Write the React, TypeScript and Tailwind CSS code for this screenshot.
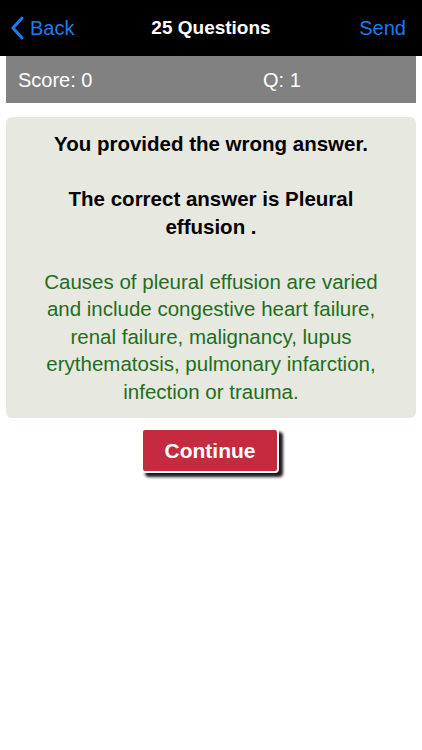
import React from "react";

export default function App() {
  return (
    <div className="w-[422px] h-[750px] bg-white flex flex-col" style={{ fontFamily: '"Liberation Sans", Arial, sans-serif' }}>
      {/* Nav bar */}
      <div className="h-[56px] bg-black flex items-center justify-between px-[10px] relative">
        <div className="flex items-center gap-[6px] text-[#1a7cf0] text-[20px]">
          <svg width="14" height="24" viewBox="0 0 14 24" fill="none">
            <path d="M12 2 L3 12 L12 22" stroke="#1a7cf0" strokeWidth="3" strokeLinecap="round" strokeLinejoin="round" />
          </svg>
          <span>Back</span>
        </div>
        <div className="absolute left-0 right-0 text-center text-white text-[19px] font-bold pointer-events-none">25 Questions</div>
        <span className="text-[#1a7cf0] text-[20px] pr-[6px]">Send</span>
      </div>

      {/* Score bar */}
      <div className="mx-[6px] h-[47px] bg-[#818181] flex items-center text-white text-[20px]">
        <span className="pl-[12px] w-[257px]">Score: 0</span>
        <span>Q: 1</span>
      </div>

      {/* Answer card */}
      <div className="mx-[6px] mt-[14px] bg-[#e7e8df] rounded-[6px] px-[30px] pt-[13px] pb-[13px] text-center text-[20.5px] leading-[27.5px]">
        <p className="font-bold text-black">You provided the wrong answer.</p>
        <p className="font-bold text-black mt-[27.5px]">The correct answer is Pleural effusion .</p>
        <p className="text-[#1e6e1e] mt-[27.5px]">
          Causes of pleural effusion are varied and include congestive heart failure, renal failure, malignancy, lupus erythematosis, pulmonary infarction, infection or trauma.
        </p>
      </div>

      {/* Continue */}
      <div className="flex justify-center mt-[10px]">
        <button className="w-[138px] h-[45px] bg-[#c52a3e] border-2 border-white rounded-[4px] text-white font-bold text-[21px] shadow-[4px_4px_3px_rgba(0,0,0,0.9)] ml-[-2px]">
          Continue
        </button>
      </div>
    </div>
  );
}
